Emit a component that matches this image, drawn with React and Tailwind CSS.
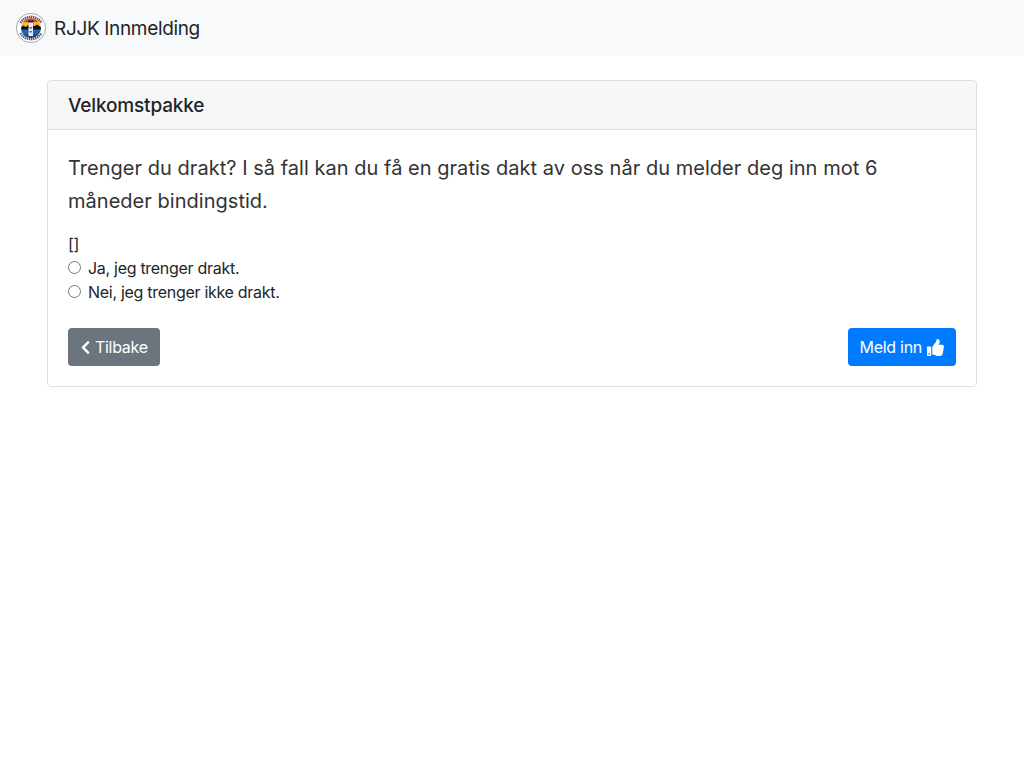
import { FaChevronLeft, FaThumbsUp } from "react-icons/fa";

function Logo() {
    return (
        <svg width="30" height="30" viewBox="0 0 30 30" className="mr-2 shrink-0">
            <circle cx="15" cy="15" r="14.6" fill="#fff" stroke="#8f9499" strokeWidth="0.8" />
            <path d="M4.5 10 A12 12 0 0 1 25.5 10" fill="none" stroke="#555" strokeWidth="2.4" strokeDasharray="1.4 0.7" />
            <path d="M4.5 20 A12 12 0 0 0 25.5 20" fill="none" stroke="#555" strokeWidth="2.4" strokeDasharray="1.4 0.7" />
            <clipPath id="logoClip">
                <circle cx="15" cy="15" r="10" />
            </clipPath>
            <g clipPath="url(#logoClip)">
                <rect x="4" y="4" width="22" height="6" fill="#e2442f" />
                <rect x="4" y="9" width="22" height="6" fill="#f7b52c" />
                <path d="M4 16 L7 12.5 L10 14 L12 12 L19 13 L21 11.5 L26 15 L26 17 L4 17 Z" fill="#111" />
                <rect x="4" y="16.5" width="22" height="10" fill="#1d63ad" />
                <rect x="4" y="21.5" width="22" height="5" fill="#15477f" />
                <rect x="12.5" y="9" width="4.5" height="14" fill="#e8eaec" />
                <rect x="12" y="7.5" width="5.5" height="2" fill="#222" />
                <rect x="13.5" y="14" width="2.5" height="1.5" fill="#666" />
                <rect x="13.5" y="18" width="2.5" height="1.5" fill="#666" />
            </g>
        </svg>
    );
}

function Radio({ label }) {
    return (
        <label className="flex items-center h-6">
            <span className="w-[13px] h-[13px] rounded-full border border-[#767676] bg-white mr-[7px] shrink-0 -translate-y-px" />
            <span>{label}</span>
        </label>
    );
}

export default function App() {
    return (
        <div className="min-h-[768px] bg-white text-[#212529] font-['Inter',sans-serif] text-base tracking-[-0.29px]">
            <nav className="flex items-center h-14 px-4 bg-[#f8f9fa]">
                <Logo />
                <span className="text-[19px] tracking-[-0.34px] pt-0.5">RJJK Innmelding</span>
            </nav>
            <div className="w-[930px] mx-auto mt-6 border border-[#dfdfdf] rounded bg-white">
                <div className="h-[49px] flex items-center px-5 pt-0.5 bg-[#f7f7f7] border-b border-[#dfdfdf] rounded-t font-medium text-[19px] tracking-[-0.15px]">
                    Velkomstpakke
                </div>
                <div className="p-5">
                    <p className="text-[20px] leading-[33px] tracking-[0.03px] text-[#333] mt-[2px] mb-[14px]">
                        Trenger du drakt? I så fall kan du få en gratis dakt av oss når du melder deg inn mot 6 måneder bindingstid.
                    </p>
                    <div className="leading-6">[]</div>
                    <Radio label="Ja, jeg trenger drakt." />
                    <Radio label="Nei, jeg trenger ikke drakt." />
                    <div className="flex justify-between mt-[24px]">
                        <button className="flex items-center h-[38px] px-3 rounded bg-[#6c757d] text-white">
                            <FaChevronLeft className="w-[11px] h-[15px] mr-[4px]" />
                            Tilbake
                        </button>
                        <button className="flex items-center h-[38px] px-3 rounded bg-[#007bff] text-white">
                            Meld inn
                            <FaThumbsUp className="w-[17px] h-[17px] ml-[5px]" />
                        </button>
                    </div>
                </div>
            </div>
        </div>
    );
}
